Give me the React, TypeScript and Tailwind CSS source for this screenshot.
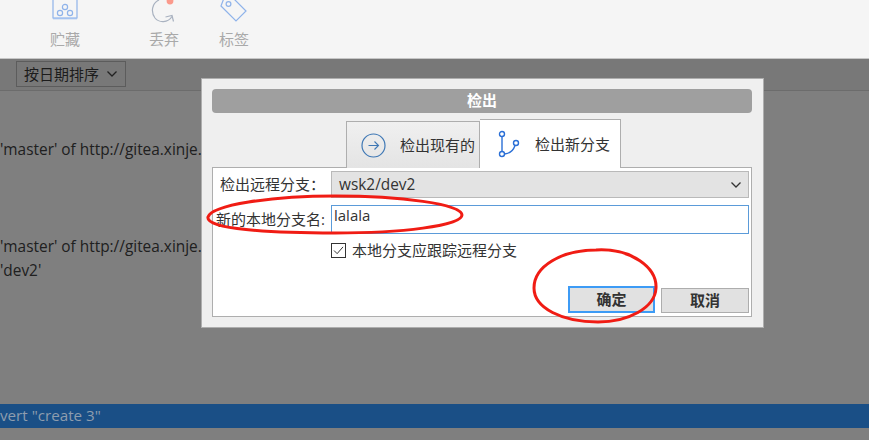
const font = { fontFamily: '"Open Sans", "Noto Sans CJK SC", sans-serif' };

function ToolItem({ label, className, children }: { label: string; className: string; children: React.ReactNode }) {
  return (
    <div className={`flex flex-col items-center ${className}`}>
      <div className="h-[24px] w-[34px] overflow-hidden flex items-end justify-center">{children}</div>
      <span className="mt-[6px] text-[15px] leading-[18px] text-[#a9a9a9]">{label}</span>
    </div>
  );
}

function StashIcon() {
  return (
    <svg width="26" height="24" viewBox="0 0 26 24" fill="none" stroke="#8fb3ea" strokeWidth="1.2">
      <path d="M1 0V18H25V0" />
      <path d="M1 18.5H25" strokeWidth="1.6" stroke="#a5c3f0" />
      <circle cx="13" cy="7" r="2.6" />
      <circle cx="8" cy="13" r="2.6" />
      <circle cx="18" cy="13" r="2.6" />
    </svg>
  );
}

function DiscardIcon() {
  return (
    <svg width="34" height="24" viewBox="0 0 34 24" fill="none">
      <path d="M12 0C5 3 3.5 12 8 18C12 23 21 23 25 16.5" stroke="#a9b2c0" strokeWidth="1.2" />
      <path d="M18.5 17L25 15.5L26.5 21.5" stroke="#a9b2c0" strokeWidth="1.2" />
      <circle cx="23" cy="1" r="3.4" fill="#fb9a8c" />
    </svg>
  );
}

function TagIcon() {
  return (
    <svg width="30" height="24" viewBox="0 0 30 24" fill="none" stroke="#8fb3ea" strokeWidth="1.2">
      <path d="M2 6L5 -2H14L27 11L17 21Z" />
      <circle cx="9.5" cy="4" r="2.4" />
    </svg>
  );
}

function Chevron({ color = '#333' }: { color?: string }) {
  return (
    <svg width="10" height="6" viewBox="0 0 10 6" fill="none" stroke={color} strokeWidth="1.3">
      <path d="M0.5 0.5L5 5L9.5 0.5" />
    </svg>
  );
}

function ArrowCircle() {
  return (
    <svg width="25" height="25" viewBox="0 0 25 25" fill="none" stroke="#3f78b5">
      <circle cx="12.5" cy="12.5" r="11.5" strokeWidth="1.2" />
      <path d="M7.5 12.5H17.5M13.5 8.5L17.5 12.5L13.5 16.5" strokeWidth="1.1" />
    </svg>
  );
}

function BranchIcon() {
  return (
    <svg width="24" height="28" viewBox="0 0 24 28" fill="none" stroke="#2a6fd6" strokeWidth="1.4">
      <circle cx="5" cy="4" r="2.5" />
      <circle cx="5" cy="24" r="2.5" />
      <circle cx="19" cy="13" r="2.5" />
      <path d="M5 6.5V21.5" />
      <path d="M7.5 24C12.5 23.5 16.5 20 18 15.5" />
    </svg>
  );
}

export default function App() {
  return (
    <div className="relative w-[869px] h-[440px] overflow-hidden bg-[#7f7f7f] text-[15px]" style={font}>
      {/* Toolbar */}
      <div className="h-[59px] bg-[#f5f5f5] border-b border-[#c6c6c6] flex items-start overflow-hidden">
        <ToolItem label="贮藏" className="ml-[48px]"><StashIcon /></ToolItem>
        <ToolItem label="丢弃" className="ml-[65px]"><DiscardIcon /></ToolItem>
        <ToolItem label="标签" className="ml-[36px]"><TagIcon /></ToolItem>
      </div>

      {/* Filter bar */}
      <div className="h-[32px] bg-[#787878] border-b border-[#6c6c6c] flex items-start pt-[2px] pl-[16px]">
        <div className="w-[110px] h-[26px] border border-[#5c5c5c] flex items-center pl-[7px] gap-[8px] text-[#1c1c1c]">
          <span className="whitespace-nowrap">按日期排序</span>
          <Chevron color="#222" />
        </div>
      </div>

      {/* Log lines behind the overlay */}
      <div className="h-[313px] flex flex-col text-[#202020] text-[15.4px] leading-[24px] pt-[47px] overflow-hidden">
        <div className="whitespace-nowrap">'master' of http://gitea.xinje.com/</div>
        <div className="whitespace-nowrap mt-[73px]">'master' of http://gitea.xinje.com/</div>
        <div className="whitespace-nowrap">'dev2'</div>
      </div>
      <div className="h-[24px] bg-[#1a4f86] text-[#8e9dae] text-[15.2px] leading-[22px] whitespace-nowrap">vert "create 3"</div>

      {/* Checkout dialog */}
      <div className="absolute left-[201px] top-[78px] w-[563px] h-[250px] bg-[#efefef] border border-[#aeaeae] px-[10px] pt-[10px] text-[#333]">
        <div className="h-[24px] w-[540px] rounded-[4px] bg-[#9f9f9f] text-white text-[15px] leading-[20px] pb-[2px] font-bold flex items-center justify-center">检出</div>

        <div className="flex items-end h-[55px] pl-[134px]">
          <div className="w-[134px] h-[47px] border border-b-0 border-[#aeaeae] bg-gradient-to-b from-[#f0f0f0] to-[#e4e4e4] flex items-center pl-[14px] gap-[14px]">
            <ArrowCircle />
            <span className="whitespace-nowrap">检出现有的</span>
          </div>
          <div className="w-[141px] h-[49px] border border-l-0 border-b-0 border-[#aeaeae] bg-white flex items-center pl-[17px] gap-[14px]">
            <BranchIcon />
            <span className="whitespace-nowrap">检出新分支</span>
          </div>
        </div>

        <div className="w-[540px] h-[150px] -mt-px bg-white border border-[#aeaeae] pt-[3px] pr-[2px] flex flex-col">
          <div className="flex items-center">
            <span className="w-[118px] pl-[7px] whitespace-nowrap">检出远程分支：</span>
            <div className="flex-1 h-[27px] bg-[#e3e3e3] border border-[#b9b9b9] flex items-center justify-between px-[7px]">
              <span className="text-[15.4px]">wsk2/dev2</span>
              <Chevron />
            </div>
          </div>
          <div className="flex items-center mt-[7px]">
            <span className="w-[118px] pl-[3px] whitespace-nowrap">新的本地分支名:</span>
            <div className="flex-1 h-[29px] bg-white border border-[#5b9bd9] pl-[2px] leading-[18px]">lalala</div>
          </div>
          <div className="flex items-center mt-[5px] pl-[118px] gap-[6px]">
            <div className="w-[15px] h-[15px] border border-[#333] flex items-center justify-center">
              <svg width="11" height="9" viewBox="0 0 12 10" fill="none" stroke="#333" strokeWidth="1.1">
                <path d="M1 5L4.5 8.5L11 1" />
              </svg>
            </div>
            <span className="whitespace-nowrap">本地分支应跟踪远程分支</span>
          </div>
          <div className="flex items-end justify-end gap-[6px] mt-[24px]">
            <div className="w-[87px] h-[27px] bg-[#e1e1e1] border-2 border-[#3d9bf5] flex items-center justify-center font-bold text-[15px]">确定</div>
            <div className="w-[88px] h-[25px] bg-[#e1e1e1] border border-[#adadad] flex items-center justify-center font-bold text-[15px]">取消</div>
          </div>
        </div>
      </div>

      {/* Hand-drawn red annotations */}
      <svg className="absolute inset-0 pointer-events-none" width="869" height="440" fill="none" stroke="#f01c14" strokeWidth="3">
        <path d="M208 217C212 205 270 196 335 196C400 196 462 204 462 215C462 226 400 233 335 233C270 233 205 229 208 217Z" />
        <path d="M596 250C632 248 657 268 656 288C655 308 628 322 598 322C562 322 534 308 534 288C534 266 562 250 596 250Z" />
      </svg>
    </div>
  );
}
